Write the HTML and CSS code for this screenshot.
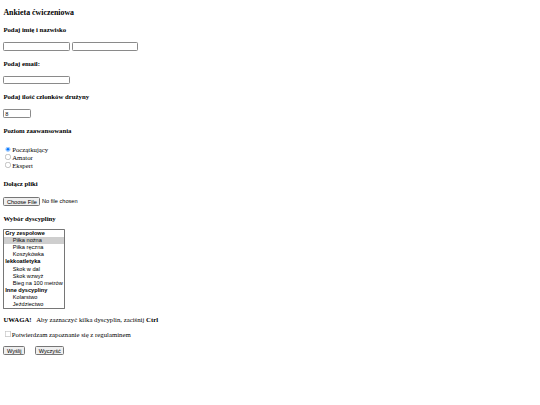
FILE: index.html
```html
<!DOCTYPE html>
<html lang="pl">
<head>
<meta charset="utf-8">
<title>Ankieta ćwiczeniowa</title>
<link rel="stylesheet" href="styles.css">
</head>
<body class="page">
<h3 class="title">Ankieta ćwiczeniowa</h3>
<form class="survey">
<h4 class="label">Podaj imię i nazwisko</h4>
<input class="field" type="text"> <input class="field" type="text">
<h4 class="label">Podaj email:</h4>
<input class="field" type="email">
<h4 class="label">Podaj ilość członków drużyny</h4>
<input class="field num" type="number" value="8">
<h4 class="label">Poziom zaawansowania</h4>
<div class="radios">
<input class="radio" type="radio" name="lvl" checked>Początkujący<br>
<input class="radio" type="radio" name="lvl">Amator<br>
<input class="radio" type="radio" name="lvl">Ekspert
</div>
<h4 class="label">Dołącz pliki</h4>
<input class="file" type="file">
<h4 class="label label-tight">Wybór dyscypliny</h4>
<select class="list" multiple size="11">
<optgroup label="Gry zespołowe">
<option selected>Piłka nożna</option>
<option>Piłka ręczna</option>
<option>Koszykówka</option>
</optgroup>
<optgroup label="lekkoatletyka">
<option>Skok w dal</option>
<option>Skok wzwyż</option>
<option>Bieg na 100 metrów</option>
</optgroup>
<optgroup label="Inne dyscypliny">
<option>Kolarstwo</option>
<option>Jeździectwo</option>
</optgroup>
</select>
<p class="note"><b>UWAGA!</b>&nbsp;&nbsp; Aby zaznaczyć kilka dyscyplin, zaciśnij <b>Ctrl</b></p>
<p class="agree"><input class="check" type="checkbox">Potwierdzam zapoznanie się z regulaminem</p>
<p class="actions"><input class="btn" type="submit" value="Wyślij"> &nbsp;&nbsp;&nbsp;&nbsp; <input class="btn" type="reset" value="Wyczyść"></p>
</form>
</body>
</html>
```

FILE: styles.css
```css
html {
  zoom: 0.421875;
  background: #ffffff;
}
.page {
  margin: 0 8px 8px;
  font-family: "Liberation Serif", "Times New Roman", serif;
  font-size: 16px;
  color: #000;
}
.title {
  font-size: 18.72px;
  margin: 18.72px 0;
}
.label {
  font-size: 16px;
  margin: 21.28px 0;
}
.label-tight {
  margin: 20px 0 17px;
}
.field, .file, .list, .btn {
  font-family: "Liberation Sans", Arial, sans-serif;
  font-size: 13.333px;
}
.field {
  width: 158px;
  height: 21px;
  box-sizing: border-box;
  border: 1px solid #8a8a8a;
  border-radius: 3px;
  padding: 1px 2px;
}
.num {
  width: 66px;
}
.radios {
  padding: 5px 0;
}
.file {
  margin: 4px 0 0;
}
.note, .agree, .actions {
  margin: 16px 0;
}
.actions {
  margin-top: 20px;
}
```
